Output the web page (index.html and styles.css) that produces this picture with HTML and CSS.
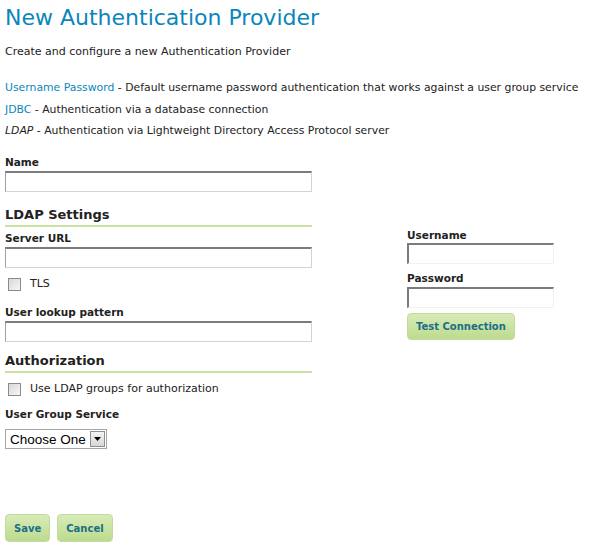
FILE: index.html
```html
<!DOCTYPE html>
<html>
<head>
<meta charset="utf-8">
<link rel="stylesheet" href="styles.css">
</head>
<body>
<h1 class="title">New Authentication Provider</h1>
<p class="intro">Create and configure a new Authentication Provider</p>
<ul class="providers">
  <li><a class="plink">Username Password</a> - Default username password authentication that works against a user group service</li>
  <li><a class="plink">JDBC</a> - Authentication via a database connection</li>
  <li><em>LDAP</em> - Authentication via Lightweight Directory Access Protocol server</li>
</ul>
<form class="form">
  <div class="field name-field">
    <label class="lbl">Name</label>
    <input class="txt wide" type="text">
  </div>
  <div class="columns">
    <div class="main">
      <h3 class="section first">LDAP Settings</h3>
      <div class="field after-section">
        <label class="lbl">Server URL</label>
        <input class="txt wide" type="text">
      </div>
      <div class="check"><span class="box"></span><span>TLS</span></div>
      <div class="field after-check">
        <label class="lbl">User lookup pattern</label>
        <input class="txt wide" type="text">
      </div>
      <h3 class="section">Authorization</h3>
      <div class="check"><span class="box"></span><span>Use LDAP groups for authorization</span></div>
      <div class="field after-check group-field">
        <label class="lbl">User Group Service</label>
        <div class="select"><span class="sel-text">Choose One</span><span class="sel-btn"><svg width="7" height="4" viewBox="0 0 7 4"><path d="M0 0h7L3.5 4z" fill="#000"/></svg></span></div>
      </div>
    </div>
    <div class="side">
      <label class="lbl">Username</label>
      <input class="txt narrow" type="text">
      <label class="lbl second">Password</label>
      <input class="txt narrow" type="password">
      <button class="btn test" type="button">Test Connection</button>
    </div>
  </div>
  <div class="actions">
    <button class="btn" type="button">Save</button>
    <button class="btn" type="button">Cancel</button>
  </div>
</form>
</body>
</html>
```
FILE: styles.css
```css
body {
  margin: 0;
  padding: 0 5px;
  font-family: "DejaVu Sans", Verdana, sans-serif;
  font-size: 11px;
  color: #222;
  background: #fff;
}
.title {
  margin: 3px 0 0;
  font-size: 22px;
  font-weight: normal;
  color: #0b86bb;
  line-height: 30px;
}
.intro {
  margin: 11px 0 0;
  line-height: 16px;
}
.providers {
  list-style: none;
  margin: 20px 0 0;
  padding: 0;
  font-size: 10.85px;
}
.providers li {
  line-height: 16px;
  margin-bottom: 5.5px;
}
.plink {
  color: #0b86bb;
}
.form {
  margin-top: 16px;
}
.lbl {
  display: block;
  font-weight: bold;
  font-size: 10.5px;
  line-height: 13px;
  padding-top: 1px;
  margin-bottom: -1px;
}
.txt {
  display: block;
  box-sizing: border-box;
  height: 21px;
  margin: 3px 0 0;
  padding: 0 3px;
  border: 1px solid #d3d3d3;
  border-top: 2px solid #7b7b7b;
  border-left: 1px solid #a0a0a0;
  background: #fff;
}
.wide { width: 307px; }
.narrow {
  width: 147px;
  border-left: 2px solid #7b7b7b;
  border-right: 1px solid #f0f0f0;
  border-bottom: 1px solid #f0f0f0;
  margin-top: 2px;
}
.columns {
  display: flex;
  gap: 95px;
}
.main { width: 307px; }
.section {
  margin: 10px 0 0;
  padding-top: 1px;
  padding-bottom: 2px;
  font-size: 13px;
  line-height: 16px;
  border-bottom: 2px solid #c9e2a1;
  width: 307px;
}
.section.first { margin-top: 14px; }
.main .field.after-section { margin-top: 4px; }
.main .field.after-check { margin-top: 15px; }
.main .field.group-field { margin-top: 12px; }
.check {
  display: flex;
  align-items: center;
  gap: 9px;
  margin: 8px 0 0 3px;
  line-height: 14px;
  padding-top: 1px;
  margin-bottom: -1px;
}
.box {
  width: 11px;
  height: 11px;
  border: 1px solid #8a8a8a;
  background: linear-gradient(135deg, #d9d9d9, #f6f6f6);
}
.select {
  display: inline-flex;
  align-items: center;
  margin-top: 9px;
  height: 20px;
  box-sizing: border-box;
  border: 1px solid #a5a5a5;
  font-family: "Liberation Sans", Arial, sans-serif;
  font-size: 13.5px;
  color: #000;
  padding-left: 4px;
}
.sel-text { margin-right: 4px; }
.sel-btn {
  width: 15px;
  height: 16px;
  margin-right: 1px;
  box-sizing: border-box;
  border: 1px solid #8f8f8f;
  background: linear-gradient(#f4f4f4, #d6d6d6);
  display: flex;
  align-items: center;
  justify-content: center;
}
.side {
  padding-top: 36px;
}
.side .lbl.second { margin-top: 7px; }
.side .lbl.second + .txt { margin-top: 3px; }
.btn {
  display: inline-block;
  font-family: "DejaVu Sans", Verdana, sans-serif;
  font-size: 10px;
  font-weight: bold;
  color: #1c6e88;
  background: linear-gradient(#d8ebb7, #bcdb8e);
  border: 1px solid #c2dca0;
  border-radius: 4px;
  height: 28px;
  padding: 0 8px;
  cursor: pointer;
}
.test {
  margin-top: 5px;
  height: 27px;
}
.actions {
  display: flex;
  gap: 7px;
  margin-top: 65px;
}
```
